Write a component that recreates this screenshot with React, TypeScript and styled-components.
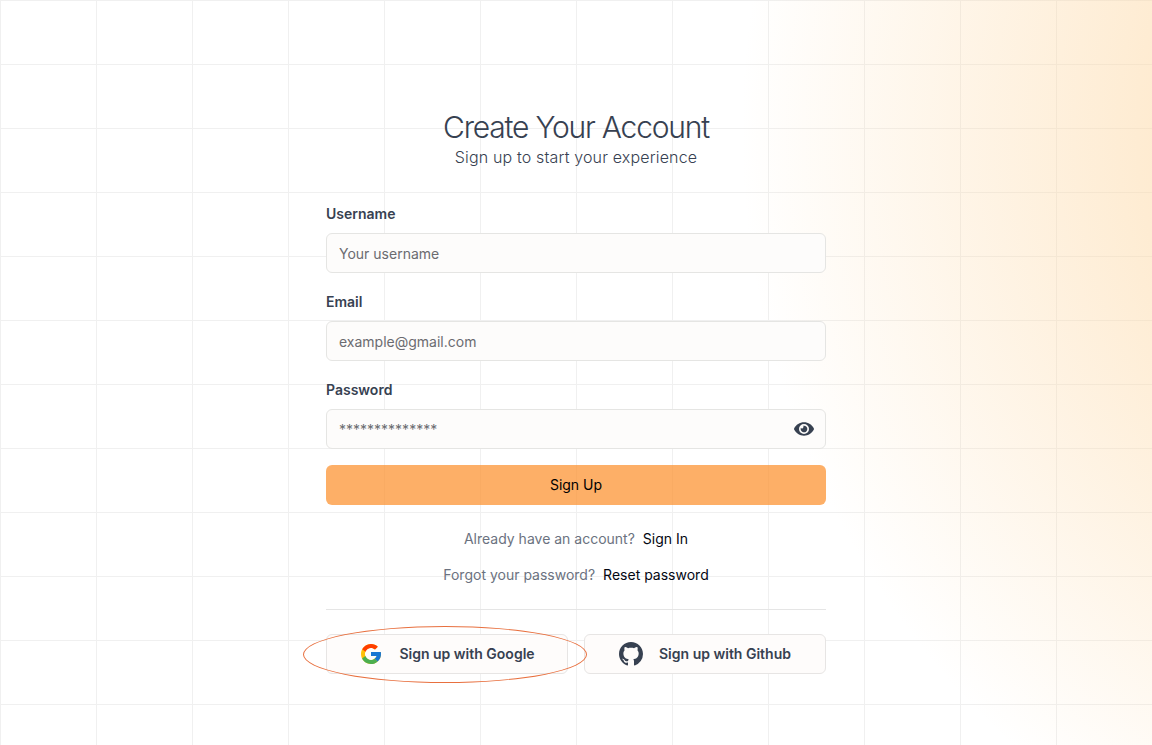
import React, { useState } from "react";
import styled, { createGlobalStyle } from "styled-components";
import { FcGoogle } from "react-icons/fc";
import { FaEye } from "react-icons/fa";
import { BsGithub } from "react-icons/bs";

const GlobalStyle = createGlobalStyle`
  *, *::before, *::after { box-sizing: border-box; }
  body {
    margin: 0;
    background: #ffffff;
    color: #374151;
    font-family: Inter, "Liberation Sans", sans-serif;
    font-size: 14px;
    line-height: 20px;
  }
`;

const Page = styled.main`
  min-height: 100vh;
  padding: 109px 16px 64px;
  display: flex;
  flex-direction: column;
  align-items: center;
  background-image:
    radial-gradient(circle 836px at calc(100% + 425px) 130px, #fdd7a2, transparent),
    linear-gradient(to right, #f0f0f0 1px, transparent 1px),
    linear-gradient(to bottom, #f0f0f0 1px, transparent 1px);
  background-size: 100% 100%, 96px 64px, 96px 64px;
`;

const Panel = styled.div`
  width: 100%;
  max-width: 500px;
`;

const Header = styled.header`
  text-align: center;
  margin-bottom: 34px;
`;

const Title = styled.h1`
  margin: 0;
  font-size: 30px;
  line-height: 36px;
  font-weight: 300;
  letter-spacing: -0.04em;
`;

const Subtitle = styled.p`
  margin: 0;
  font-size: 16px;
  line-height: 24px;
  font-weight: 300;
  letter-spacing: 0.01em;
`;

const Form = styled.form`
  display: flex;
  flex-direction: column;
  gap: 16px;
`;

const Fields = styled.div`
  display: flex;
  flex-direction: column;
  gap: 18px;
`;

const Field = styled.div`
  display: flex;
  flex-direction: column;
  gap: 8px;
`;

const Label = styled.label`
  font-weight: 600;
  line-height: 22px;
`;

const InputWrap = styled.div`
  position: relative;
`;

const Input = styled.input`
  display: block;
  width: 100%;
  height: 40px;
  padding: 0 12px;
  border: 1px solid #e5e5e3;
  border-radius: 6px;
  background: #fdfcfb;
  color: #374151;
  font: inherit;

  &::placeholder {
    color: #6b6b70;
    opacity: 1;
  }
`;

const EyeButton = styled.button`
  position: absolute;
  top: 0;
  right: 0;
  height: 40px;
  padding: 0 12px;
  display: flex;
  align-items: center;
  border: 0;
  background: none;
  color: #374151;
  cursor: pointer;
`;

const SubmitButton = styled.button`
  height: 40px;
  border: 0;
  border-radius: 6px;
  background: rgba(252, 141, 39, 0.7);
  color: #000000;
  font: inherit;
  font-weight: 400;
  cursor: pointer;
`;

const Links = styled.div`
  display: flex;
  flex-direction: column;
  gap: 16px;
  padding: 24px 0;
  border-bottom: 1px solid #e5e5e5;
`;

const LinkRow = styled.p`
  margin: 0;
  display: flex;
  justify-content: center;
  gap: 8px;
  color: #6b7280;

  a {
    color: #030712;
    text-decoration: none;
  }
`;

const Socials = styled.div`
  display: grid;
  grid-template-columns: 1fr 1fr;
  gap: 16px;
  padding-top: 24px;
`;

const SocialSlot = styled.div`
  position: relative;
`;

const SocialButton = styled.button`
  width: 100%;
  height: 40px;
  display: flex;
  align-items: center;
  justify-content: center;
  gap: 16px;
  border: 1px solid #e7e5e4;
  border-radius: 6px;
  background: #fefcfb;
  color: #374151;
  font: inherit;
  font-weight: 600;
  cursor: pointer;
`;

const Highlight = styled.span`
  position: absolute;
  z-index: 1;
  inset: -8px -19px -9px -23px;
  border: 1px solid #e8703f;
  border-radius: 50%;
  pointer-events: none;
`;

export default function App() {
  const [visible, setVisible] = useState(false);

  return (
    <Page>
      <GlobalStyle />
      <Panel>
        <Header>
          <Title>Create Your Account</Title>
          <Subtitle>Sign up to start your experience</Subtitle>
        </Header>
        <Form onSubmit={(e) => e.preventDefault()}>
          <Fields>
            <Field>
              <Label htmlFor="username">Username</Label>
              <Input id="username" type="text" placeholder="Your username" />
            </Field>
            <Field>
              <Label htmlFor="email">Email</Label>
              <Input id="email" type="email" placeholder="example@gmail.com" />
            </Field>
            <Field>
              <Label htmlFor="password">Password</Label>
              <InputWrap>
                <Input
                  id="password"
                  type={visible ? "text" : "password"}
                  placeholder="**************"
                />
                <EyeButton
                  type="button"
                  aria-label="Toggle password visibility"
                  onClick={() => setVisible(!visible)}
                >
                  <FaEye size={20} />
                </EyeButton>
              </InputWrap>
            </Field>
          </Fields>
          <SubmitButton type="submit">Sign Up</SubmitButton>
        </Form>
        <Links>
          <LinkRow>
            Already have an account? <a href="#signin">Sign In</a>
          </LinkRow>
          <LinkRow>
            Forgot your password? <a href="#reset">Reset password</a>
          </LinkRow>
        </Links>
        <Socials>
          <SocialSlot>
            <SocialButton type="button">
              <FcGoogle size={24} />
              Sign up with Google
            </SocialButton>
            <Highlight />
          </SocialSlot>
          <SocialSlot>
            <SocialButton type="button">
              <BsGithub size={24} />
              Sign up with Github
            </SocialButton>
          </SocialSlot>
        </Socials>
      </Panel>
    </Page>
  );
}
